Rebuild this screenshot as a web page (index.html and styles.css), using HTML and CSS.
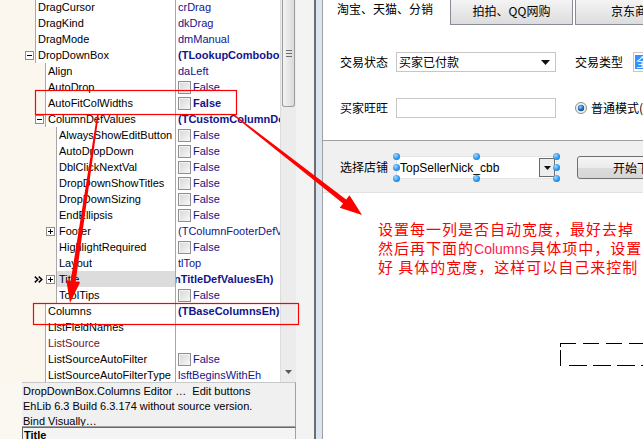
FILE: index.html
```html
<!DOCTYPE html>
<html>
<head>
<meta charset="utf-8">
<link rel="stylesheet" href="styles.css">
</head>
<body>
<div class="screen">
  <div class="inspector">
    <div class="grid">
      <div class="rows">
        <div class="row"><div class="name"><div class="gut l0"></div><div class="nm">DragCursor</div></div><div class="val">crDrag</div></div>
        <div class="row"><div class="name"><div class="gut l0"></div><div class="nm">DragKind</div></div><div class="val">dkDrag</div></div>
        <div class="row"><div class="name"><div class="gut l0"></div><div class="nm">DragMode</div></div><div class="val">dmManual</div></div>
        <div class="row"><div class="name"><div class="gut l0"><svg class="exp" width="9" height="9" viewBox="0 0 9 9"><rect x="0.5" y="0.5" width="8" height="8" fill="#fff" stroke="#8c8c8c"/><path d="M2 4.5h5" stroke="#000"/></svg></div><div class="nm">DropDownBox</div></div><div class="val b">(TLookupComboboxDropDownBoxEh)</div></div>
        <div class="row"><div class="name"><div class="gut l1"></div><div class="nm">Align</div></div><div class="val">daLeft</div></div>
        <div class="row"><div class="name"><div class="gut l1"></div><div class="nm">AutoDrop</div></div><div class="val"><span class="cb"></span>False</div></div>
        <div class="row"><div class="name"><div class="gut l1"></div><div class="nm">AutoFitColWidths</div></div><div class="val b"><span class="cb"></span>False</div></div>
        <div class="row"><div class="name"><div class="gut l1"><svg class="exp" width="9" height="9" viewBox="0 0 9 9"><rect x="0.5" y="0.5" width="8" height="8" fill="#fff" stroke="#8c8c8c"/><path d="M2 4.5h5" stroke="#000"/></svg></div><div class="nm">ColumnDefValues</div></div><div class="val b">(TCustomColumnDefValuesEh)</div></div>
        <div class="row"><div class="name"><div class="gut l2"></div><div class="nm">AlwaysShowEditButton</div></div><div class="val"><span class="cb"></span>False</div></div>
        <div class="row"><div class="name"><div class="gut l2"></div><div class="nm">AutoDropDown</div></div><div class="val"><span class="cb"></span>False</div></div>
        <div class="row"><div class="name"><div class="gut l2"></div><div class="nm">DblClickNextVal</div></div><div class="val"><span class="cb"></span>False</div></div>
        <div class="row"><div class="name"><div class="gut l2"></div><div class="nm">DropDownShowTitles</div></div><div class="val"><span class="cb"></span>False</div></div>
        <div class="row"><div class="name"><div class="gut l2"></div><div class="nm">DropDownSizing</div></div><div class="val"><span class="cb"></span>False</div></div>
        <div class="row"><div class="name"><div class="gut l2"></div><div class="nm">EndEllipsis</div></div><div class="val"><span class="cb"></span>False</div></div>
        <div class="row"><div class="name"><div class="gut l2"><svg class="exp" width="9" height="9" viewBox="0 0 9 9"><rect x="0.5" y="0.5" width="8" height="8" fill="#fff" stroke="#8c8c8c"/><path d="M2 4.5h5M4.5 2v5" stroke="#000"/></svg></div><div class="nm">Footer</div></div><div class="val">(TColumnFooterDefValuesEh)</div></div>
        <div class="row"><div class="name"><div class="gut l2"></div><div class="nm">HighlightRequired</div></div><div class="val"><span class="cb"></span>False</div></div>
        <div class="row"><div class="name"><div class="gut l2"></div><div class="nm">Layout</div></div><div class="val">tlTop</div></div>
        <div class="row selrow"><div class="name"><div class="gut l2"><svg class="mark" width="9" height="7" viewBox="0 0 9 7"><path d="M0.8 0.6l3 2.9-3 2.9M4.8 0.6l3 2.9-3 2.9" fill="none" stroke="#000" stroke-width="1.5"/></svg><svg class="exp" width="9" height="9" viewBox="0 0 9 9"><rect x="0.5" y="0.5" width="8" height="8" fill="#fff" stroke="#8c8c8c"/><path d="M2 4.5h5M4.5 2v5" stroke="#000"/></svg></div><div class="nm">Title</div></div><div class="val b clip">nTitleDefValuesEh)</div></div>
        <div class="row"><div class="name"><div class="gut l2"></div><div class="nm">ToolTips</div></div><div class="val"><span class="cb"></span>False</div></div>
        <div class="row"><div class="name"><div class="gut l1"></div><div class="nm">Columns</div></div><div class="val b">(TBaseColumnsEh)</div></div>
        <div class="row"><div class="name"><div class="gut l1"></div><div class="nm">ListFieldNames</div></div><div class="val"></div></div>
        <div class="row"><div class="name"><div class="gut l1"></div><div class="nm maroon">ListSource</div></div><div class="val"></div></div>
        <div class="row"><div class="name"><div class="gut l1"></div><div class="nm">ListSourceAutoFilter</div></div><div class="val"><span class="cb"></span>False</div></div>
        <div class="row"><div class="name"><div class="gut l1"></div><div class="nm">ListSourceAutoFilterType</div></div><div class="val">lsftBeginsWithEh</div></div>
      </div>
      <div class="vscroll">
        <div class="thumb"><svg width="6" height="7" viewBox="0 0 6 7"><path d="M0 0.5h6M0 3.5h6M0 6.5h6" stroke="#6f6f6f"/></svg></div>
        <div class="track"></div>
        <div class="dn"><svg width="7" height="4" viewBox="0 0 7 4"><path d="M0 0h7L3.5 4z" fill="#5a5a5a"/></svg></div>
      </div>
    </div>
    <div class="status">
      <div>DropDownBox.Columns Editor …&nbsp; Edit buttons</div>
      <div>EhLib 6.3 Build 6.3.174 without source version.</div>
      <div>Bind Visually…</div>
    </div>
    <div class="titlebar">Title</div>
  </div>

  <div class="splitter"><div class="sp-gap"></div><div class="sp-dark"></div><div class="sp-blue"></div></div>

  <div class="designer">
    <div class="tabs">
      <div class="tab on">淘宝、天猫、分销</div>
      <div class="tab off">拍拍、QQ网购</div>
      <div class="tab off t3">京东商城</div>
    </div>
    <div class="page">
      <div class="frow">
        <span class="lbl">交易状态</span>
        <div class="field"><span>买家已付款</span><svg class="dd" width="9" height="5" viewBox="0 0 9 5"><path d="M0 0h9L4.5 5z" fill="#111"/></svg></div>
        <span class="lbl lbl2">交易类型</span>
        <div class="field field2"><span class="hl">全部</span></div>
      </div>
      <div class="frow">
        <span class="lbl">买家旺旺</span>
        <div class="field"></div>
        <svg class="radio" width="12" height="12" viewBox="0 0 12 12"><defs><radialGradient id="rg" cx="0.4" cy="0.35" r="0.7"><stop offset="0" stop-color="#8fd3ff"/><stop offset="0.6" stop-color="#1d6fc4"/><stop offset="1" stop-color="#123f7a"/></radialGradient></defs><circle cx="6" cy="6" r="5.5" fill="#f3f3f3" stroke="#8a8a8a"/><circle cx="6" cy="6" r="3.2" fill="url(#rg)"/></svg>
        <span class="rlabel">普通模式(</span>
      </div>
    </div>
    <div class="shopbar">
      <span class="lbl">选择店铺</span>
      <div class="combo">
        <span class="ctext">TopSellerNick_cbb</span>
        <div class="cbtn"><svg width="7" height="4" viewBox="0 0 7 4"><path d="M0 0h7L3.5 4z" fill="#111"/></svg></div>
        <i class="h tl"></i><i class="h tm"></i><i class="h tr"></i>
        <i class="h ml"></i><i class="h mr"></i>
        <i class="h bl"></i><i class="h bm"></i><i class="h br"></i>
      </div>
      <div class="btn">开始下载</div>
    </div>
    <div class="canvas">
      <div class="note">设置每一列是否自动宽度，最好去掉<br>然后再下面的<span class="lat">Columns</span>具体项中，设置<br>好 具体的宽度，这样可以自己来控制</div>
      <svg class="dash" width="83" height="23" viewBox="0 0 83 23"><path d="M0 0.5H83" stroke="#000" stroke-dasharray="16 7"/><path d="M9 22.5H83" stroke="#000" stroke-dasharray="18 6"/><path d="M0.5 0V4M0.5 7V23" stroke="#000"/></svg>
    </div>
  </div>

  <svg class="marks" width="643" height="439" viewBox="0 0 643 439">
    <rect x="35.5" y="90.5" width="201" height="24" fill="none" stroke="#f00" stroke-width="1.2"/>
    <rect x="33.5" y="303.5" width="265" height="21" fill="none" stroke="#f00" stroke-width="1.2"/>
    <polygon points="235.4,115.4 346.1,199.5 349.5,195.2 362,215 339.7,207.8 343.1,203.5 234.6,116.6" fill="#f00"/>
    <polygon points="97.2,113.9 70.7,280.8 66.3,280.2 70,303 80.1,282.2 75.7,281.6 98.8,114.1" fill="#f00"/>
  </svg>
</div>
</body>
</html>
```
FILE: styles.css
```css
* { box-sizing: border-box; }
html, body { margin: 0; padding: 0; }
body {
  width: 643px; height: 439px; overflow: hidden; background: #fff;
  font-family: "Liberation Sans", "Noto Sans CJK SC", sans-serif;
}
.screen { position: relative; display: flex; width: 643px; height: 439px; overflow: hidden; }

/* ---------- object inspector ---------- */
.inspector { width: 296px; flex: none; display: flex; flex-direction: column; background: #fbf8f1; }
.grid { height: 382px; display: flex; overflow: hidden; flex: none; }
.rows { width: 280px; margin-top: -1px; background: #fff; font-size: 11px; }
.row { display: flex; height: 16px; line-height: 16px; }
.name { width: 175px; flex: none; display: flex; }
.gut {
  flex: none; display: flex; justify-content: flex-end; align-items: center;
  gap: 3px; padding-right: 1px; background: #fbf7ef;
}
.l0 { width: 35px; }
.l1 { width: 45px; }
.l2 { width: 56px; }
.exp { display: block; flex: none; }
.mark { display: block; flex: none; }
.nm {
  flex: 1; min-width: 0; border-left: 1px solid #a8a8a8; padding-left: 2px;
  white-space: nowrap; overflow: hidden; color: #000; background: #fff;
}
.nm.maroon { color: #6e1230; }
.row.selrow .nm { background: #dcdcdc; }
.val {
  width: 105px; flex: none; border-left: 1px solid #a8a8a8; padding-left: 2px;
  color: #14148c; white-space: nowrap; overflow: hidden; display: flex; align-items: center;
}
.val.clip { padding-left: 0; text-indent: -2px; }
.b { font-weight: bold; }
.cb {
  width: 13px; height: 13px; flex: none; margin-right: 2px;
  border: 1px solid #8e8f8f; background: linear-gradient(135deg, #d6d6d6, #f7f7f7);
  box-shadow: inset 1px 1px 0 #f4f4f4;
}
.vscroll {
  width: 16px; flex: none; display: flex; flex-direction: column;
  background: #ececec; border-left: 1px solid #dcdcdc;
}
.thumb {
  height: 107px; flex: none; margin: 0 1px;
  border: 1px solid #9c9c9c; border-top: none; border-radius: 0 0 3px 3px;
  background: linear-gradient(90deg, #f4f4f4, #dadada);
  display: flex; align-items: center; justify-content: center;
}
.track { flex: 1; }
.dn { height: 20px; display: flex; align-items: center; justify-content: center; }
.status {
  height: 45px; flex: none; margin-left: 22px; padding: 1px 0 0 1px;
  background: #f0f0f0; border-top: 1px solid #c9c9c9; border-right: 1px solid #a0a0a0;
  border-bottom: 1px solid #a0a0a0;
  font-size: 11px; line-height: 15px; color: #000; white-space: nowrap; overflow: hidden;
}
.titlebar {
  flex: 1; margin-left: 22px; padding-left: 1px;
  border-top: 1px solid #6a6a6a; border-left: 1px solid #6a6a6a; border-right: 1px solid #a0a0a0;
  background: #f4f4f4; font-size: 11px; font-weight: bold; line-height: 15px;
}

/* ---------- splitter ---------- */
.splitter { width: 26px; flex: none; display: flex; }
.sp-gap { width: 18px; background: #f3f3f3; }
.sp-dark { width: 2px; background: #6e6e6e; }
.sp-blue { width: 6px; background: #dbe5f1; }

/* ---------- designer ---------- */
.designer {
  flex: 1; min-width: 0; display: flex; flex-direction: column; overflow: hidden;
  border-left: 1px solid #a0a0a0; background: #fff;
  font-family: "Noto Sans CJK SC", sans-serif; font-size: 12px; color: #000;
}
.tabs { display: flex; height: 25px; flex: none; }
.tab { height: 25px; line-height: 16px; white-space: nowrap; flex: none; }
.tab.on { width: 127px; padding: 1px 0 0 14px; background: #fff; }
.tab.off {
  width: 123px; padding-top: 3px; text-align: center;
  border: 1px solid #898c95; border-top: none;
  background: linear-gradient(#f4f4f4, #dcdcdc);
}
.tab.t3 { margin-left: 2px; width: 110px; text-align: left; padding-left: 35px; }
.page { height: 115px; flex: none; padding: 27px 0 0 17px; background: #fff; }
.frow { display: flex; align-items: center; height: 20px; white-space: nowrap; }
.frow + .frow { margin-top: 26px; }
.lbl { width: 56px; flex: none; line-height: 16px; }
.lbl2 { width: 58px; margin-left: 19px; }
.field {
  width: 160px; height: 20px; flex: none; display: flex; align-items: center;
  padding-left: 2px; border: 1px solid #c6c6c6; background: #fff; line-height: 16px;
}
.field .dd { margin-left: auto; margin-right: 5px; }
.field2 { width: 40px; padding-left: 1px; }
.hl { background: #3390ff; color: #fff; padding: 0 1px; line-height: 14px; }
.radio { margin-left: 19px; flex: none; display: block; }
.rlabel { margin-left: 4px; line-height: 16px; }
.shopbar {
  height: 53px; flex: none; display: flex; align-items: center;
  padding: 0 0 0 17px; background: #f0f0f0;
  border-top: 1px solid #a0a0a0; border-bottom: 1px solid #e2e2e2;
}
.combo {
  position: relative; width: 161px; height: 23px; flex: none; margin-top: 2px;
  display: flex; align-items: center; padding-left: 3px;
  background: #fff; border: 1px solid #e4e4e4;
  font-family: "Liberation Sans", sans-serif; font-size: 12px;
}
.ctext { flex: 1; }
.cbtn {
  width: 16px; height: 19px; margin-right: 1px; flex: none;
  border: 1px solid #6a6a6a; background: #ededed;
  display: flex; align-items: center; justify-content: center;
}
.h {
  position: absolute; width: 7px; height: 7px; border-radius: 50%;
  background: radial-gradient(circle at 38% 35%, #9ad8ff, #1f8ae4 65%, #1470c4);
}
.tl { left: -4px; top: -4px; }
.tm { left: calc(50% - 3.5px); top: -4px; }
.tr { right: -4px; top: -4px; }
.ml { left: -4px; top: calc(50% - 3.5px); }
.mr { right: -4px; top: calc(50% - 3.5px); }
.bl { left: -4px; bottom: -4px; }
.bm { left: calc(50% - 3.5px); bottom: -4px; }
.br { right: -4px; bottom: -4px; }
.btn {
  margin-left: 20px; margin-top: 2px; width: 90px; height: 23px; flex: none;
  border: 1px solid #707070; border-radius: 3px;
  background: linear-gradient(#f6f6f6 0%, #ebebeb 50%, #dcdcdc 51%, #d6d6d6 100%);
  padding-left: 35px; line-height: 21px; white-space: nowrap;
}
.canvas { flex: 1; padding: 27px 0 0 55px; background: #fff; }
.note {
  color: #f00; font-size: 15px; line-height: 18.5px; letter-spacing: 1px; white-space: nowrap;
}
.note .lat { font-family: "Liberation Sans", sans-serif; font-size: 14px; letter-spacing: 0; color: #ff1a4a; margin-right: 1px; }
.dash { display: block; margin: 66px 0 0 182px; }

/* ---------- annotation overlay ---------- */
.marks { position: absolute; left: 0; top: 0; pointer-events: none; }
```
